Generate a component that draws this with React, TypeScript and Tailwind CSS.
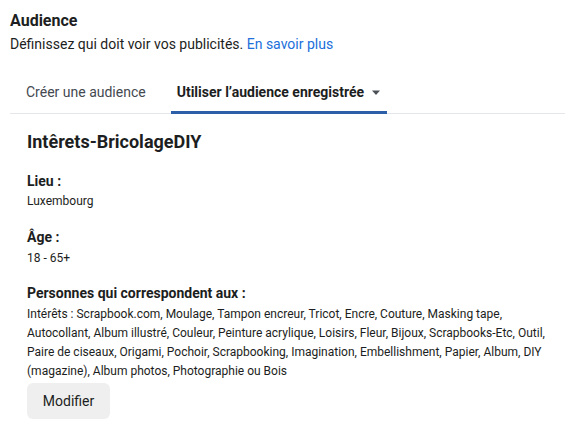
export default function App() {
  return (
    <div className="min-h-screen w-[576px] bg-white text-[#1c1e21] font-['Roboto','Liberation_Sans',sans-serif]">
      {/* Header */}
      <div className="pl-[10px] pt-[11px]">
        <h2 className="text-[16px] font-bold leading-[20px]">Audience</h2>
        <p className="mt-[3px] text-[14px] leading-[20px] text-[#1c1e21]">
          Définissez qui doit voir vos publicités.{' '}
          <a href="#" className="text-[#216fdb]">En savoir plus</a>
        </p>
      </div>

      {/* Tabs */}
      <div className="ml-[10px] mt-[28px] flex w-[555px] gap-[9px] border-b border-[#e4e6eb]">
        <button className="px-4 pb-[11px] text-[14px] leading-[20px] text-[#444950]">
          Créer une audience
        </button>
        <button className="relative flex items-center gap-[7px] px-[6px] pb-[11px] text-[14px] font-bold leading-[20px] text-[#1c1e21]">
          Utiliser l’audience enregistrée
          <svg width="10" height="6" viewBox="0 0 10 6" className="mt-[1px]">
            <path d="M1 0.5h8L5 5z" fill="#4b4f56" />
          </svg>
          <span className="absolute -bottom-px left-0 right-0 h-[3px] bg-[#2d5ea8]" />
        </button>
      </div>

      {/* Saved audience */}
      <div className="px-[27px] pt-[16px]">
        <h3 className="text-[18px] font-bold leading-[24px]">Intêrets-BricolageDIY</h3>

        <div className="mt-[18px]">
          <div className="text-[14px] font-bold leading-[18px]">Lieu :</div>
          <div className="mt-[3px] text-[12px] leading-[16px]">Luxembourg</div>
        </div>

        <div className="mt-[19px]">
          <div className="text-[14px] font-bold leading-[18px]">Âge :</div>
          <div className="mt-[4px] text-[12px] leading-[16px]">18 - 65+</div>
        </div>

        <div className="mt-[18px]">
          <div className="text-[14px] font-bold leading-[18px]">Personnes qui correspondent aux :</div>
          <p className="mt-[3px] text-[12px] leading-[19px]">
            Intérêts : Scrapbook.com, Moulage, Tampon encreur, Tricot, Encre, Couture, Masking tape,
            Autocollant, Album illustré, Couleur, Peinture acrylique, Loisirs, Fleur, Bijoux, Scrapbooks-Etc, Outil,
            Paire de ciseaux, Origami, Pochoir, Scrapbooking, Imagination, Embellishment, Papier, Album, DIY
            (magazine), Album photos, Photographie ou Bois
          </p>
        </div>

        <button className="mt-[2px] h-[36px] w-[83px] rounded-[6px] bg-[#efefef] text-[14px] text-[#1c1e21]">
          Modifier
        </button>
      </div>
    </div>
  );
}
